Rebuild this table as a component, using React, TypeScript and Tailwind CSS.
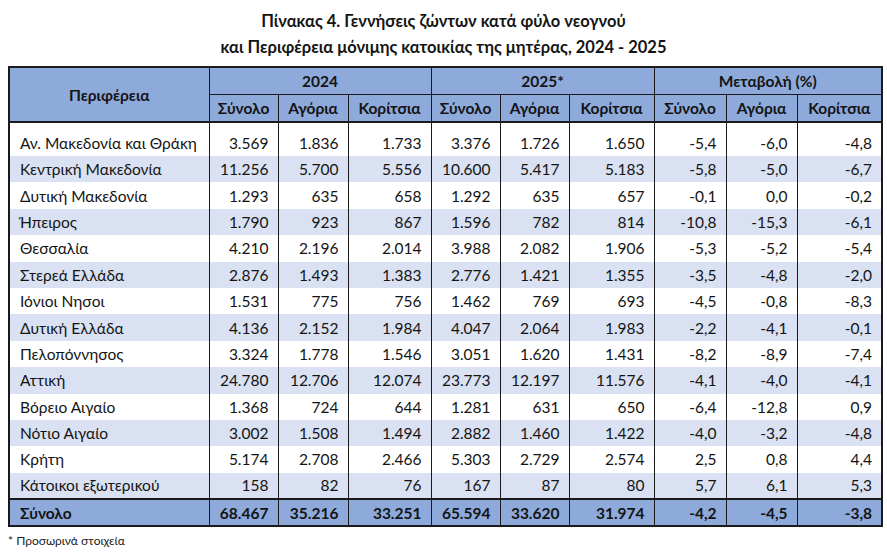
const rows: [string, string[]][] = [
  ["Αν. Μακεδονία και Θράκη", ["3.569", "1.836", "1.733", "3.376", "1.726", "1.650", "-5,4", "-6,0", "-4,8"]],
  ["Κεντρική Μακεδονία", ["11.256", "5.700", "5.556", "10.600", "5.417", "5.183", "-5,8", "-5,0", "-6,7"]],
  ["Δυτική Μακεδονία", ["1.293", "635", "658", "1.292", "635", "657", "-0,1", "0,0", "-0,2"]],
  ["Ήπειρος", ["1.790", "923", "867", "1.596", "782", "814", "-10,8", "-15,3", "-6,1"]],
  ["Θεσσαλία", ["4.210", "2.196", "2.014", "3.988", "2.082", "1.906", "-5,3", "-5,2", "-5,4"]],
  ["Στερεά Ελλάδα", ["2.876", "1.493", "1.383", "2.776", "1.421", "1.355", "-3,5", "-4,8", "-2,0"]],
  ["Ιόνιοι Νησοι", ["1.531", "775", "756", "1.462", "769", "693", "-4,5", "-0,8", "-8,3"]],
  ["Δυτική Ελλάδα", ["4.136", "2.152", "1.984", "4.047", "2.064", "1.983", "-2,2", "-4,1", "-0,1"]],
  ["Πελοπόννησος", ["3.324", "1.778", "1.546", "3.051", "1.620", "1.431", "-8,2", "-8,9", "-7,4"]],
  ["Αττική", ["24.780", "12.706", "12.074", "23.773", "12.197", "11.576", "-4,1", "-4,0", "-4,1"]],
  ["Βόρειο Αιγαίο", ["1.368", "724", "644", "1.281", "631", "650", "-6,4", "-12,8", "0,9"]],
  ["Νότιο Αιγαίο", ["3.002", "1.508", "1.494", "2.882", "1.460", "1.422", "-4,0", "-3,2", "-4,8"]],
  ["Κρήτη", ["5.174", "2.708", "2.466", "5.303", "2.729", "2.574", "2,5", "0,8", "4,4"]],
  ["Κάτοικοι εξωτερικού", ["158", "82", "76", "167", "87", "80", "5,7", "6,1", "5,3"]],
];

const total = ["68.467", "35.216", "33.251", "65.594", "33.620", "31.974", "-4,2", "-4,5", "-3,8"];

const subHeads = ["Σύνολο", "Αγόρια", "Κορίτσια"];

export default function App() {
  return (
    <div className="w-[887px] h-[552px] bg-white text-[#141414] font-['Lato','Noto_Sans',sans-serif] overflow-hidden">
      {/* Title */}
      <div className="pt-[8px] text-center text-[16.5px] font-bold leading-[26px]">
        <div>Πίνακας 4. Γεννήσεις ζώντων κατά φύλο νεογνού</div>
        <div>και Περιφέρεια μόνιμης κατοικίας της μητέρας, 2024 - 2025</div>
      </div>

      <div className="px-[8px] pt-[6px]">
        <table className="w-[873px] table-fixed border-collapse border-2 border-[#1a1a1a] text-[15.5px] leading-[20px]">
          <colgroup>
            <col className="w-[200px]" />
            <col className="w-[69px]" />
            <col className="w-[70px]" />
            <col className="w-[83px]" />
            <col className="w-[69px]" />
            <col className="w-[69px]" />
            <col className="w-[85px]" />
            <col className="w-[72px]" />
            <col className="w-[71px]" />
            <col className="w-[85px]" />
          </colgroup>
          <thead>
            <tr className="h-[27px] bg-[#8eaadb] font-bold">
              <th rowSpan={2} className="border border-[#1a1a1a] border-b-2 text-center font-bold">
                Περιφέρεια
              </th>
              <th colSpan={3} className="border border-[#1a1a1a] text-center">2024</th>
              <th colSpan={3} className="border border-[#1a1a1a] text-center">2025*</th>
              <th colSpan={3} className="border border-[#1a1a1a] text-center">Μεταβολή (%)</th>
            </tr>
            <tr className="h-[28px] bg-[#8eaadb]">
              {[0, 1, 2].flatMap((g) =>
                subHeads.map((s) => (
                  <th key={`${g}-${s}`} className="border border-[#1a1a1a] border-b-2 text-center font-bold">
                    {s}
                  </th>
                ))
              )}
            </tr>
          </thead>
          <tbody>
            {rows.map(([name, vals], i) => (
              <tr key={name} className={`${i === 0 ? "h-[34px]" : "h-[26.4px]"} ${i % 2 === 1 ? "bg-[#d9e1f2]" : "bg-white"}`}>
                <td className={`border-x border-[#1a1a1a] pl-[10px] whitespace-nowrap ${i === 0 ? "pt-[7px]" : ""}`}>{name}</td>
                {vals.map((v, j) => (
                  <td key={j} className={`border-x border-[#1a1a1a] text-right pr-[9px] ${i === 0 ? "pt-[7px]" : ""}`}>
                    {v}
                  </td>
                ))}
              </tr>
            ))}
            <tr className="h-[27px] bg-[#8eaadb] font-bold">
              <td className="border border-t-2 border-[#1a1a1a] pl-[10px]">Σύνολο</td>
              {total.map((v, j) => (
                <td key={j} className="border border-t-2 border-[#1a1a1a] text-right pr-[9px]">
                  {v}
                </td>
              ))}
            </tr>
          </tbody>
        </table>
      </div>

      <div className="pl-[8px] pt-[6px] text-[12px] leading-[16px] text-[#222]">* Προσωρινά στοιχεία</div>
    </div>
  );
}
